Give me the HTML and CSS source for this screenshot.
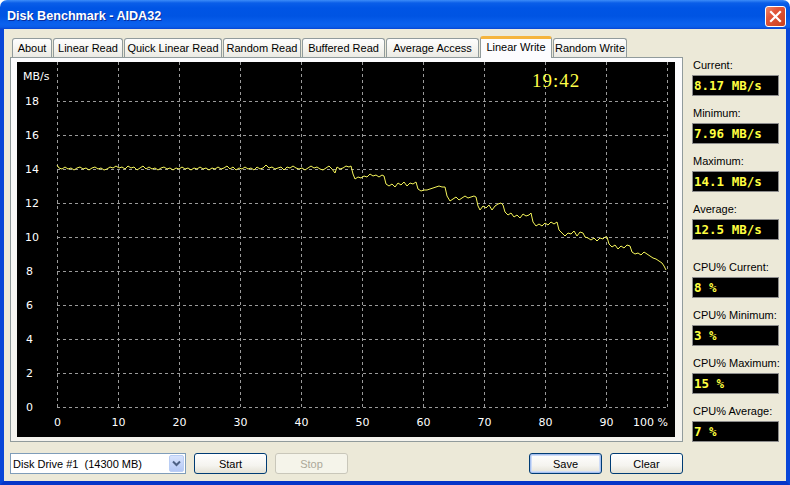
FILE: index.html
```html
<!DOCTYPE html>
<html>
<head>
<meta charset="utf-8">
<title>Disk Benchmark - AIDA32</title>
<link rel="stylesheet" href="styles.css">
</head>
<body>
<div class="win">
  <div class="titlebar">
    <span class="title">Disk Benchmark - AIDA32</span>
    <span class="close"><svg width="13" height="13" viewBox="0 0 13 13"><path d="M2 2 L11 11 M11 2 L2 11" stroke="#fff" stroke-width="2.2" stroke-linecap="square"/></svg></span>
  </div>
  <div class="frame">
    <div class="leftcol">
      <div class="tabs">
        <div class="tab w1">About</div>
        <div class="tab w2">Linear Read</div>
        <div class="tab w3">Quick Linear Read</div>
        <div class="tab w4">Random Read</div>
        <div class="tab w5">Buffered Read</div>
        <div class="tab w6">Average Access</div>
        <div class="tab sel w7">Linear Write</div>
        <div class="tab w8">Random Write</div>
      </div>
      <div class="panel">
        <svg class="chart" width="658" height="375" viewBox="0 0 658 375">
          <rect x="0" y="0" width="658" height="375" fill="#000"/>
          <g class="grid">
            <path d="M40.5 0V345 M101.5 0V345 M162.5 0V345 M223.5 0V345 M284.5 0V345 M345.5 0V345 M406.5 0V345 M467.5 0V345 M528.5 0V345 M589.5 0V345 M650.5 0V345"/>
            <path d="M40 39.5H651 M40 73.5H651 M40 107.5H651 M40 141.5H651 M40 175.5H651 M40 209.5H651 M40 243.5H651 M40 277.5H651 M40 311.5H651 M40 345.5H651"/>
          </g>
          <text class="lbl" x="6" y="18">MB/s</text>
          <text class="lbl" x="8" y="43">18</text>
          <text class="lbl" x="8" y="77">16</text>
          <text class="lbl" x="8" y="111">14</text>
          <text class="lbl" x="8" y="145">12</text>
          <text class="lbl" x="8" y="179">10</text>
          <text class="lbl" x="9" y="213">8</text>
          <text class="lbl" x="9" y="247">6</text>
          <text class="lbl" x="9" y="281">4</text>
          <text class="lbl" x="9" y="315">2</text>
          <text class="lbl" x="9" y="349">0</text>
          <g class="xl">
            <text x="40.5" y="364">0</text>
            <text x="101.5" y="364">10</text>
            <text x="162.5" y="364">20</text>
            <text x="223.5" y="364">30</text>
            <text x="284.5" y="364">40</text>
            <text x="345.5" y="364">50</text>
            <text x="406.5" y="364">60</text>
            <text x="467.5" y="364">70</text>
            <text x="528.5" y="364">80</text>
            <text x="589.5" y="364">90</text>
          </g>
          <text class="lbl" x="651" y="364" text-anchor="end">100 %</text>
          <text class="clock" x="515" y="25">19:42</text>
          <g transform="translate(-17,-62)">
            <polyline class="line" points="57,165 59,168 62,169 65,167 68,169 71,168 74,170 77,168 80,167 83,169 86,168 89,170 92,168 95,167 98,169 101,168 104,170 107,169 110,167 113,168 116,166 119,168 122,167 125,169 128,166 131,168 134,167 137,170 140,168 143,166 146,169 149,167 152,169 155,168 158,170 161,168 164,167 167,169 170,168 173,170 176,168 179,169 182,167 185,169 188,168 191,170 194,168 197,169 200,167 203,169 206,168 209,170 212,168 215,169 218,167 221,169 224,168 227,166 230,169 233,167 236,170 239,168 242,169 245,167 248,169 251,168 254,170 257,167 260,169 263,168 266,165 269,168 272,167 275,169 278,168 281,167 284,170 287,167 290,168 293,166 296,168 299,169 302,168 305,170 308,168 311,166 314,168 317,167 320,169 323,170 326,168 329,166 332,169 335,173 337,167 340,169 343,168 346,166 349,167 351,166 353,174 355,179 358,177 361,178 364,176 367,177 370,174 373,176 376,175 379,177 382,175 384,176 386,184 389,186 392,184 395,187 398,183 401,185 404,182 407,186 410,183 413,184 416,182 418,189 421,191 424,190 427,190 430,189 433,188 436,187 439,186 442,187 445,187 447,196 450,201 453,199 456,197 459,200 462,198 465,196 468,198 471,197 474,196 476,197 478,206 480,210 483,206 486,208 489,205 492,210 495,206 498,204 501,203 503,205 505,212 508,215 511,213 514,217 517,215 520,218 523,214 526,216 529,215 531,213 533,222 536,226 539,224 542,226 545,223 548,225 551,222 554,224 557,222 559,230 562,233 565,236 568,233 571,234 574,231 577,236 580,232 583,233 585,237 588,238 591,240 594,238 597,241 600,238 603,239 605,237 607,237 609,244 612,247 615,245 618,249 621,246 624,248 627,245 630,246 632,252 635,254 638,253 641,255 644,252 647,254 650,256 653,258 656,259 659,261 662,263 664,266 666,270"/>
          </g>
        </svg>
      </div>
      <div class="bottombar">
        <div class="combo"><span class="combotext">Disk Drive #1&nbsp; (14300 MB)</span><span class="dropbtn"><svg width="9" height="7" viewBox="0 0 9 7"><path d="M1 1.5 L4.5 5 L8 1.5" fill="none" stroke="#4d6185" stroke-width="2"/></svg></span></div>
        <button class="btn">Start</button>
        <button class="btn dis">Stop</button>
        <span class="spacer"></span>
        <button class="btn def">Save</button>
        <button class="btn">Clear</button>
      </div>
    </div>
    <div class="rightcol">
      <div class="stat"><div class="slabel">Current:</div><div class="sval">8.17 MB/s</div></div>
      <div class="stat"><div class="slabel">Minimum:</div><div class="sval">7.96 MB/s</div></div>
      <div class="stat"><div class="slabel">Maximum:</div><div class="sval">14.1 MB/s</div></div>
      <div class="stat"><div class="slabel">Average:</div><div class="sval">12.5 MB/s</div></div>
      <div class="stat cpu"><div class="slabel">CPU% Current:</div><div class="sval">8 %</div></div>
      <div class="stat"><div class="slabel">CPU% Minimum:</div><div class="sval">3 %</div></div>
      <div class="stat"><div class="slabel">CPU% Maximum:</div><div class="sval">15 %</div></div>
      <div class="stat"><div class="slabel">CPU% Average:</div><div class="sval">7 %</div></div>
    </div>
  </div>
</div>
</body>
</html>
```
FILE: styles.css
```css
html, body { margin: 0; padding: 0; background: #fff; }
body { width: 790px; height: 485px; overflow: hidden; font-family: "Liberation Sans", Arial, sans-serif; font-size: 11px; color: #000; }

.win { width: 790px; height: 485px; display: flex; flex-direction: column; }

.titlebar {
  height: 29px; flex: none;
  display: flex; align-items: center; justify-content: space-between;
  border-radius: 7px 7px 0 0;
  background: linear-gradient(to bottom, #3c8cf8 0px, #0a5ee8 3px, #0055e5 8px, #0054e3 16px, #0b61ee 24px, #0a5de8 27px, #0844d4 29px);
  padding: 0 4px 0 7px;
}
.title { color: #fff; font-weight: bold; font-size: 12.6px; font-family: "Liberation Sans", Arial, sans-serif; text-shadow: 1px 1px 0 #0a2e9c; margin-top: 3px; }
.close {
  width: 19px; height: 19px; margin-top: 3px;
  border: 1px solid #fff; border-radius: 3px;
  background: linear-gradient(135deg, #f08a6a 0%, #e2563a 35%, #c8401f 100%);
  display: flex; align-items: center; justify-content: center;
}

.frame {
  flex: 1;
  display: flex; align-items: flex-start;
  background: #ece9d8;
  border-left: 4px solid #0846d8;
  border-right: 4px solid #0846d8;
  border-bottom: 4px solid #0635c8;
  padding-top: 7px;
}

.leftcol { margin-left: 6px; width: 673px; display: flex; flex-direction: column; }

.tabs { display: flex; align-items: flex-end; height: 21px; padding-left: 2px; position: relative; z-index: 1; }
.tab {
  box-sizing: border-box; height: 19px; margin-right: 1px;
  border: 1px solid #919b9c; border-bottom: none; border-radius: 3px 3px 0 0;
  background: linear-gradient(to bottom, #fefefe 0%, #f4f3ee 60%, #ebeae4 100%);
  text-align: center; line-height: 18px; white-space: nowrap;
}
.tab.sel {
  height: 22px; margin-bottom: -1px;
  border-top: 3px solid #f5b43c;
  background: #fcfcfe;
  line-height: 16px;
}
.w1 { width: 40px; } .w2 { width: 70px; } .w3 { width: 98px; } .w4 { width: 78px; }
.w5 { width: 83px; } .w6 { width: 93px; } .w7 { width: 72px; } .w8 { width: 74px; }

.panel {
  box-sizing: border-box; width: 673px; height: 385px;
  border: 1px solid #919b9c;
  background: linear-gradient(to bottom, #fcfcfe, #f4f3ee);
  padding: 4px 6px;
}
.chart { display: block; }
.grid path { stroke: #9a9a9a; stroke-width: 1; stroke-dasharray: 3 3; fill: none; }
.lbl, .xl text { fill: #fff; font-family: "DejaVu Sans", Verdana, sans-serif; font-size: 11px; }
.xl text { text-anchor: middle; }
.clock { fill: #ffff48; font-family: "Liberation Serif", "Times New Roman", serif; font-size: 19px; letter-spacing: 1px; }
.line { fill: none; stroke: #f4f45a; stroke-width: 1; }

.bottombar { display: flex; align-items: center; margin-top: 11px; height: 21px; }
.combo {
  box-sizing: border-box; width: 176px; height: 21px;
  border: 1px solid #7f9db9; background: #fff;
  display: flex; align-items: center; justify-content: space-between;
  padding: 0 1px 0 2px;
}
.combotext { white-space: nowrap; }
.dropbtn {
  box-sizing: border-box; width: 15px; height: 17px;
  border: 1px solid #bacef5; border-radius: 2px;
  background: linear-gradient(to bottom, #d7e3fd, #b4c8f5);
  display: flex; align-items: center; justify-content: center;
}
.btn {
  box-sizing: border-box; width: 73px; height: 21px; padding: 0;
  margin-left: 8px;
  border: 1px solid #003c74; border-radius: 3px;
  background: linear-gradient(to bottom, #ffffff 0%, #f5f4ef 60%, #e4e2d6 100%);
  font-family: "Liberation Sans", Arial, sans-serif; font-size: 11px; color: #000;
}
.btn.dis { border-color: #c9c7ba; color: #aca899; background: #f5f4ea; }
.btn.def { box-shadow: inset 0 0 0 1px #a7c0ef, inset 0 0 0 2px #cedcf7; }
.spacer { flex: 1; }

.rightcol { margin-left: 9px; margin-top: 22px; width: 87px; display: flex; flex-direction: column; }
.stat { margin-bottom: 10px; }
.stat.cpu { margin-top: 10px; }
.slabel { height: 14px; line-height: 14px; padding-left: 1px; margin-bottom: 3px; white-space: nowrap; }
.sval {
  box-sizing: border-box; height: 21px;
  border: 1px solid #8c8c8c; background: #000;
  color: #ffff40; font-family: "DejaVu Sans Mono", "Liberation Mono", monospace; font-weight: bold; font-size: 12.5px;
  line-height: 19px; padding-left: 1px; white-space: pre;
}
```
